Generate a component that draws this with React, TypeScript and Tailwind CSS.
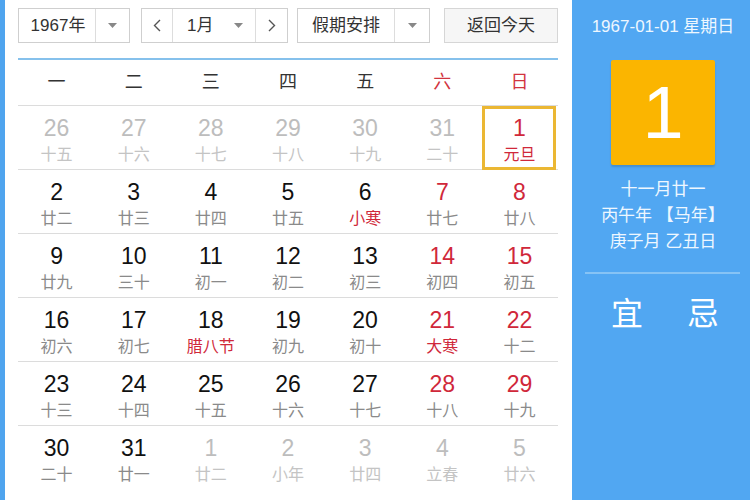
import React from 'react';

type Day = { n: number; l: string; faded?: boolean; red?: boolean; lred?: boolean; today?: boolean };

const weeks: Day[][] = [
  [
    { n: 26, l: '十五', faded: true },
    { n: 27, l: '十六', faded: true },
    { n: 28, l: '十七', faded: true },
    { n: 29, l: '十八', faded: true },
    { n: 30, l: '十九', faded: true },
    { n: 31, l: '二十', faded: true },
    { n: 1, l: '元旦', red: true, lred: true, today: true },
  ],
  [
    { n: 2, l: '廿二' },
    { n: 3, l: '廿三' },
    { n: 4, l: '廿四' },
    { n: 5, l: '廿五' },
    { n: 6, l: '小寒', lred: true },
    { n: 7, l: '廿七', red: true },
    { n: 8, l: '廿八', red: true },
  ],
  [
    { n: 9, l: '廿九' },
    { n: 10, l: '三十' },
    { n: 11, l: '初一' },
    { n: 12, l: '初二' },
    { n: 13, l: '初三' },
    { n: 14, l: '初四', red: true },
    { n: 15, l: '初五', red: true },
  ],
  [
    { n: 16, l: '初六' },
    { n: 17, l: '初七' },
    { n: 18, l: '腊八节', lred: true },
    { n: 19, l: '初九' },
    { n: 20, l: '初十' },
    { n: 21, l: '大寒', red: true, lred: true },
    { n: 22, l: '十二', red: true },
  ],
  [
    { n: 23, l: '十三' },
    { n: 24, l: '十四' },
    { n: 25, l: '十五' },
    { n: 26, l: '十六' },
    { n: 27, l: '十七' },
    { n: 28, l: '十八', red: true },
    { n: 29, l: '十九', red: true },
  ],
  [
    { n: 30, l: '二十' },
    { n: 31, l: '廿一' },
    { n: 1, l: '廿二', faded: true },
    { n: 2, l: '小年', faded: true },
    { n: 3, l: '廿四', faded: true },
    { n: 4, l: '立春', faded: true },
    { n: 5, l: '廿六', faded: true },
  ],
];

const heads = ['一', '二', '三', '四', '五', '六', '日'];

function Caret() {
  return (
    <svg width="9" height="5" viewBox="0 0 9 5">
      <path d="M0 0 L9 0 L4.5 5 Z" fill="#888" />
    </svg>
  );
}

export default function App() {
  return (
    <div
      className="flex w-[750px] h-[500px] overflow-hidden bg-white"
      style={{ fontFamily: '"Liberation Sans", "Noto Sans CJK SC", sans-serif' }}
    >
      <div className="w-[5px] bg-[#4fa4ee]" />

      <div className="w-[567px] pl-[13px] pr-[14px]">
        {/* controls */}
        <div className="flex items-center h-[35px] mt-[8px] text-[17px] text-[#333]">
          <div className="flex h-full w-[112px] border border-[#cfcfcf] bg-white">
            <div className="flex-1 flex items-center justify-center pl-[2px]">1967年</div>
            <div className="w-[34px] border-l border-[#ddd] flex items-center justify-center">
              <Caret />
            </div>
          </div>
          <div className="flex h-full w-[147px] ml-[11px] border border-[#cfcfcf] bg-white">
            <div className="w-[31px] border-r border-[#ddd] flex items-center justify-center text-[#555]">
              <svg width="8" height="13" viewBox="0 0 8 13">
                <path d="M7 1 L1.5 6.5 L7 12" fill="none" stroke="#555" strokeWidth="1.4" />
              </svg>
            </div>
            <div className="flex-1 flex items-center pl-[14px] pr-[12px] justify-between">
              <span>1月</span>
              <Caret />
            </div>
            <div className="w-[32px] border-l border-[#ddd] flex items-center justify-center">
              <svg width="8" height="13" viewBox="0 0 8 13">
                <path d="M1 1 L6.5 6.5 L1 12" fill="none" stroke="#555" strokeWidth="1.4" />
              </svg>
            </div>
          </div>
          <div className="flex h-full w-[133px] ml-[9px] border border-[#cfcfcf] bg-white">
            <div className="flex-1 flex items-center justify-center">假期安排</div>
            <div className="w-[35px] border-l border-[#ddd] flex items-center justify-center">
              <Caret />
            </div>
          </div>
          <div className="flex h-full w-[114px] ml-[14px] border border-[#d6d6d6] bg-[#f6f6f6] items-center justify-center">
            返回今天
          </div>
        </div>

        {/* header */}
        <div className="mt-[15px] border-t-2 border-[#86c1ec] grid grid-cols-7 h-[47px] items-center text-[18px]">
          {heads.map((h, i) => (
            <div key={h} className={`text-center ${i >= 5 ? 'text-[#d2343f]' : 'text-[#333]'}`}>
              {h}
            </div>
          ))}
        </div>

        {weeks.map((w, wi) => (
          <div key={wi} className="grid grid-cols-7 h-[64px] border-t border-[#dcdcdc]">
            {w.map((d, di) => {
              const numColor = d.faded ? 'text-[#bdbdbd]' : d.red ? 'text-[#d0283a]' : 'text-[#111]';
              const lunColor = d.faded ? 'text-[#c4c4c4]' : d.lred ? 'text-[#d0283a]' : 'text-[#8a8a8a]';
              return (
                <div key={di} className="relative flex flex-col items-center pt-[9px]">
                  {d.today && (
                    <div className="absolute left-[1px] right-[2px] top-0 h-[64px] border-[3px] border-[#ebb733]" />
                  )}
                  <div className={`text-[23px] leading-[26px] ${numColor}`}>{d.n}</div>
                  <div className={`text-[16px] leading-[20px] mt-[4px] ${lunColor}`}>{d.l}</div>
                </div>
              );
            })}
          </div>
        ))}
      </div>

      <div className="flex-1 bg-[#51a7f2] flex flex-col items-center text-[#eef7ff]">
        <div className="mt-[17px] text-[17px] leading-[20px] pl-[4px]">1967-01-01 星期日</div>
        <div className="mt-[23px] w-[104px] h-[105px] bg-[#fbb500] rounded-[2px] shadow-[0_2px_2px_rgba(0,0,0,0.15)] flex items-center justify-center text-white text-[74px] leading-none ml-[4px]">
          1
        </div>
        <div className="mt-[12px] text-[17px] leading-[26px] text-center ml-[4px]">
          <div>十一月廿一</div>
          <div>丙午年 【马年】</div>
          <div>庚子月 乙丑日</div>
        </div>
        <div className="mt-[17px] w-[155px] h-[2px] bg-[#86c3f5] ml-[3px]" />
        <div className="mt-[20px] flex w-full justify-between pl-[39px] pr-[31px] text-[32px] leading-[40px] text-white">
          <span>宜</span>
          <span>忌</span>
        </div>
      </div>
    </div>
  );
}
